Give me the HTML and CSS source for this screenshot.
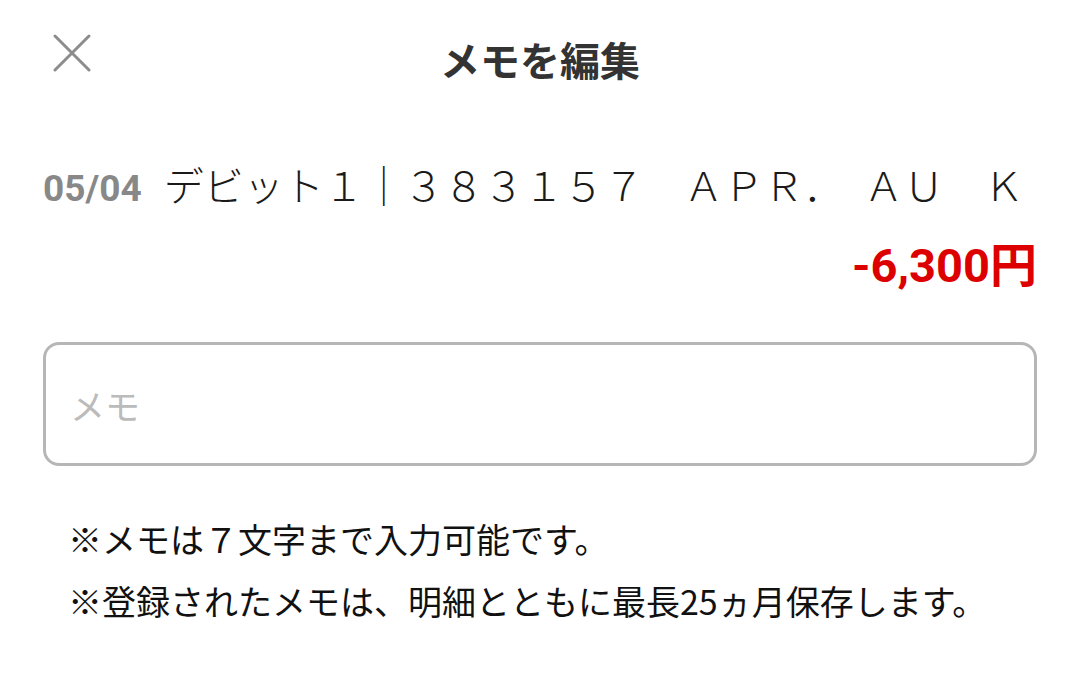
FILE: index.html
```html
<!DOCTYPE html>
<html lang="ja">
<head>
    <meta charset="UTF-8">
    <title>メモを編集</title>
    <link rel="stylesheet" href="styles.css">
</head>
<body>
<div class="page">
    <div class="header"><!-- Title bar -->
        <button class="close-button" aria-label="閉じる">
            <svg width="38" height="38" viewBox="0 0 38 38">
                <path d="M2 2 L36 36 M36 2 L2 36" stroke="#8c8c8c" stroke-width="3" stroke-linecap="round" fill="none"/>
            </svg>
        </button>
        <h1 class="title">メモを編集</h1>
    </div>
    <div class="detail"><!-- Transaction -->
        <div class="detail-row">
            <span class="date">05/04</span>
            <span class="description">デビット１｜３８３１５７　ＡＰＲ．　ＡＵ　Ｋ</span>
        </div>
        <div class="amount">-6,300円</div>
    </div>
    <div class="memo-box"><!-- Memo input -->
        <input class="memo-input" type="text" placeholder="メモ" maxlength="7">
    </div>
    <div class="notes"><!-- Notes -->
        <p>※メモは７文字まで入力可能です。</p>
        <p>※登録されたメモは、明細とともに最長25ヵ月保存します。</p>
    </div>
</div>
</body>
</html>
```

FILE: styles.css
```css
body {
    margin: 0;
    background-color: #ffffff;
    font-family: Roboto, "Noto Sans CJK JP", sans-serif;
    color: #222222;
}

.page {
    padding: 0 43px;
}

/* Title bar */
.header {
    position: relative;
    height: 155px;
    display: flex;
    align-items: flex-start;
    justify-content: center;
}

.close-button {
    position: absolute;
    left: 10px;
    top: 34px;
    padding: 0;
    border: none;
    background: none;
    cursor: pointer;
}

.close-button svg {
    display: block;
}

.title {
    margin: 34px 0 0;
    font-family: "Noto Sans CJK JP", sans-serif;
    font-size: 40px;
    font-weight: 700;
    line-height: 50px;
    color: #333333;
}

/* Transaction */
.detail-row {
    display: flex;
    align-items: baseline;
    height: 60px;
}

.date {
    font-family: Roboto, sans-serif;
    font-size: 37px;
    font-weight: 700;
    color: #888888;
    margin-right: 22px;
}

.description {
    font-family: "Noto Sans CJK JP", sans-serif;
    font-size: 40px;
    font-weight: 300;
    white-space: nowrap;
    color: #1a1a1a;
}

.amount {
    margin-top: 25px;
    text-align: right;
    font-family: Roboto, "Noto Sans CJK JP", sans-serif;
    font-size: 47px;
    font-weight: 700;
    line-height: 52px;
    color: #dd0000;
}

/* Memo input */
.memo-box {
    margin-top: 50px;
    height: 118px;
    border: 3px solid #b6b6b6;
    border-radius: 16px;
    display: flex;
    align-items: center;
}

.memo-input {
    flex: 1;
    margin: 0 24px;
    padding: 0;
    border: none;
    outline: 0;
    background: none;
    font-family: "Noto Sans CJK JP", sans-serif;
    font-size: 35px;
    color: #222222;
}

.memo-input::placeholder {
    color: #bbbbbb;
}

/* Notes */
.notes {
    margin-top: 42px;
    padding-left: 25px;
}

.notes p {
    margin: 0;
    font-family: "Noto Sans CJK JP", sans-serif;
    font-size: 34px;
    line-height: 62px;
    color: #111111;
}
```
